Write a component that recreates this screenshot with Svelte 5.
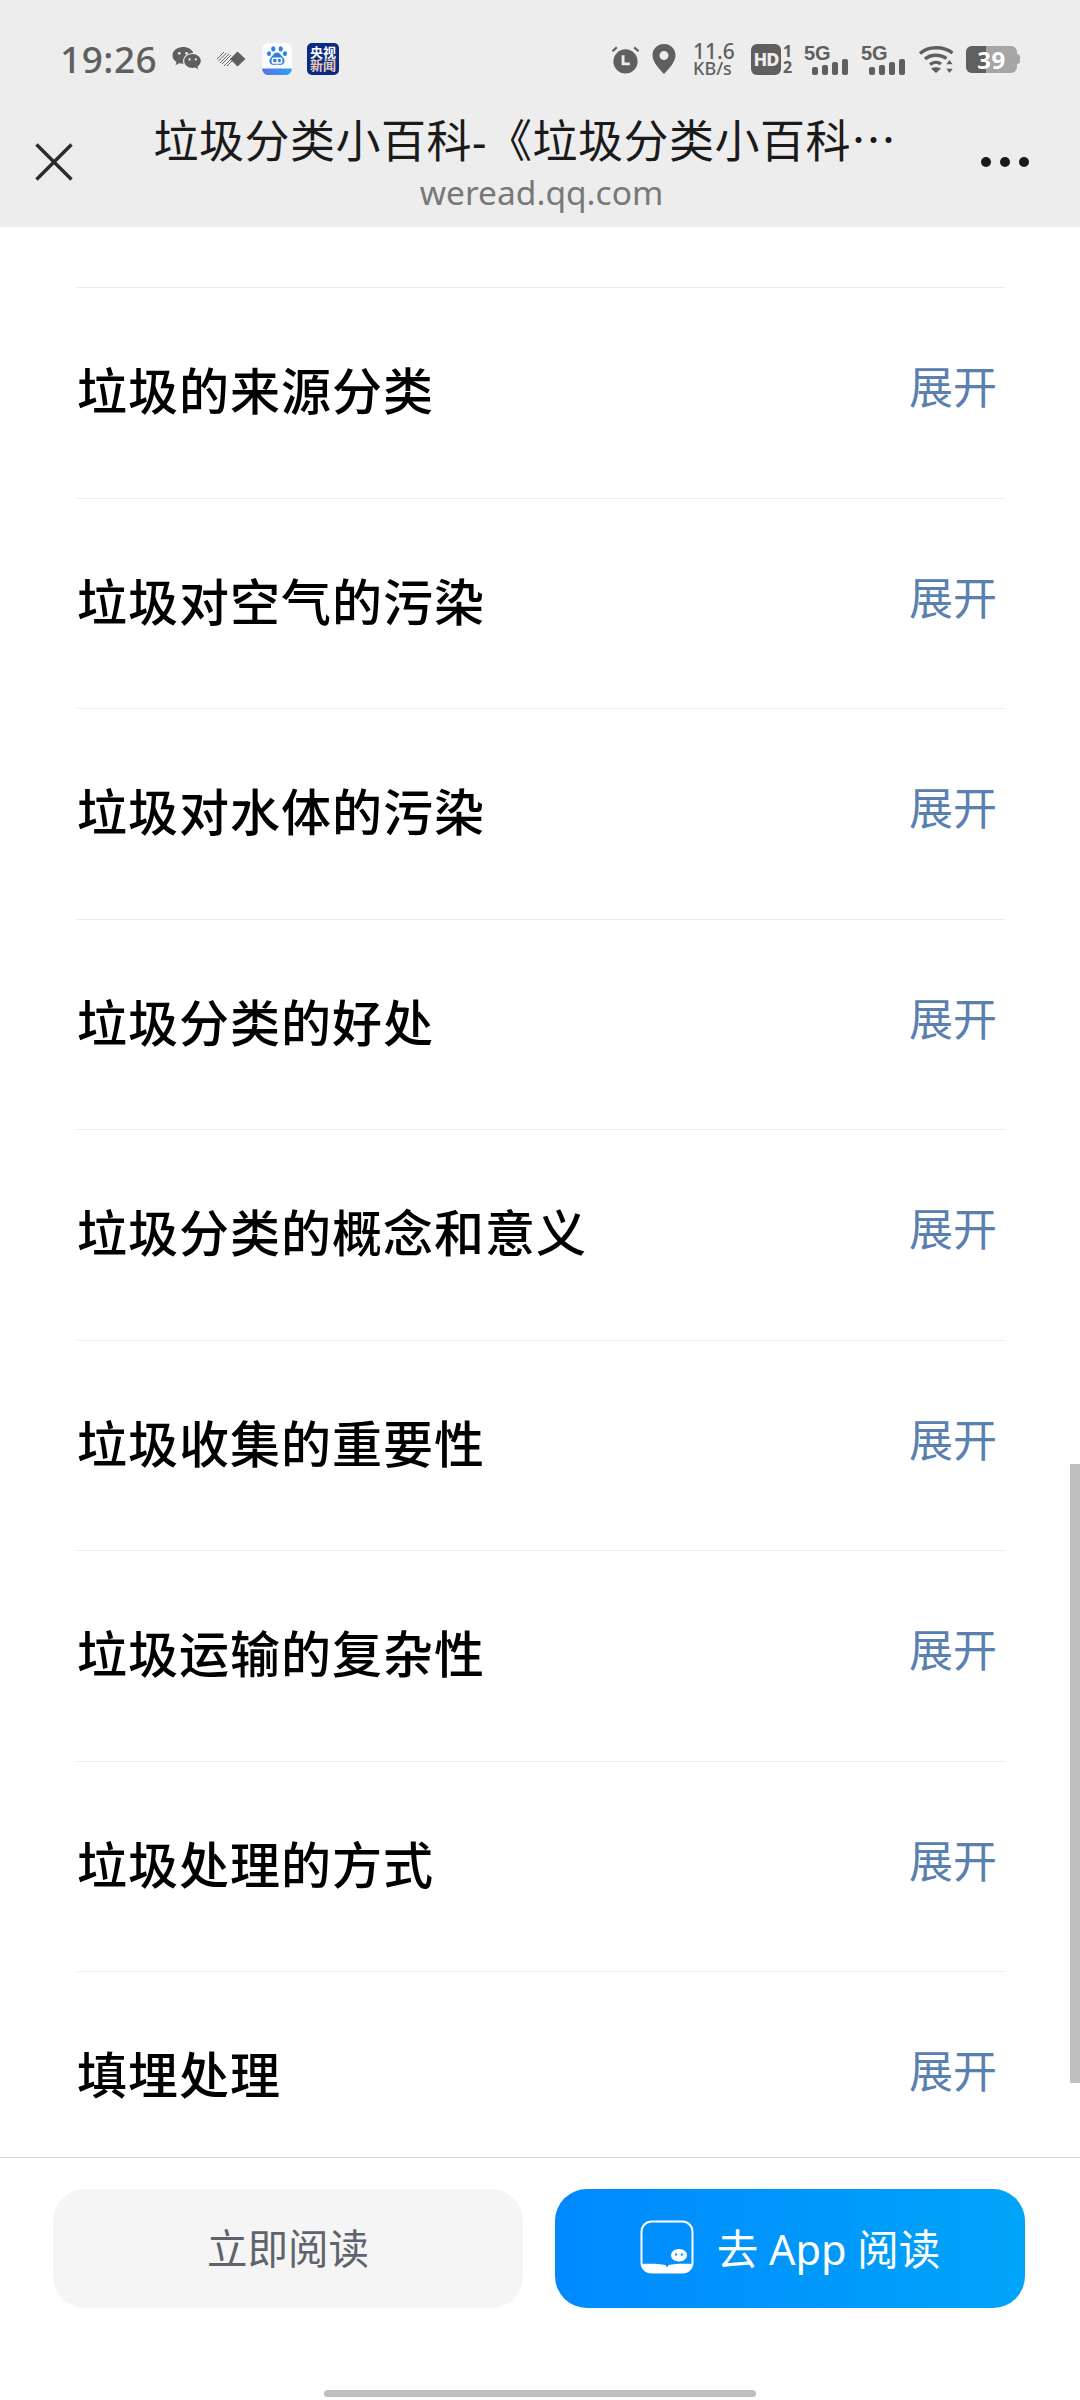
<script lang="ts">
  const chapters = [
    '垃圾的来源分类',
    '垃圾对空气的污染',
    '垃圾对水体的污染',
    '垃圾分类的好处',
    '垃圾分类的概念和意义',
    '垃圾收集的重要性',
    '垃圾运输的复杂性',
    '垃圾处理的方式',
    '填埋处理',
  ];
  const bars = [0, 1, 2, 3];
</script>

<div class="page">
  <header class="head">
    <div class="status">
      <div class="status-left">
        <span class="time">19:26</span>
        <svg class="ic-wechat" viewBox="0 0 28 26" width="29" height="27">
          <path d="M10.5 1C4.9 1 .5 4.6.5 9.1c0 2.6 1.5 4.8 3.8 6.3L3.4 18.500l3.500-1.800c1.100.3 2.200.5 3.400.5h.8c-.3-.9-.4-1.800-.4-2.700 0-4.300 4.100-7.800 9.100-7.800h.6C19.400 3.200 15.300 1 10.500 1z" fill="#5f5f5f"/>
          <path d="M19.800 7.800c-4.400 0-8 3-8 6.700s3.600 6.700 8 6.700c.9 0 1.800-.1 2.600-.4l2.900 1.600-.7-2.600c1.900-1.200 3.200-3.200 3.200-5.300 0-3.700-3.600-6.700-8-6.700z" fill="#5f5f5f"/>
          <circle cx="7" cy="7" r="1.300" fill="#ededed"/><circle cx="14" cy="7" r="1.300" fill="#ededed"/>
          <circle cx="17" cy="13" r="1.100" fill="#ededed"/><circle cx="23" cy="13" r="1.100" fill="#ededed"/>
        </svg>
        <svg class="ic-diamond" viewBox="0 0 30 16" width="30" height="16">
          <g stroke="#6a6a6a" stroke-width="1" fill="none">
            <path d="M1 8l7-7M2.500 10l8-8M4 12l9-9M6 13l9-9M8 15l8-8M11 15l6-6"/>
          </g>
          <path d="M21.500 0.500L29.500 8l-8 7.500L14 8z" fill="#5f5f5f"/>
        </svg>
        <svg class="ic-baidu" viewBox="0 0 28 30" width="30" height="32">
          <defs>
            <linearGradient id="bdband" x1="0" x2="1" y1="0" y2="0">
              <stop offset="0" stop-color="#5a6ee8"/><stop offset="1" stop-color="#2aa6f0"/>
            </linearGradient>
          </defs>
          <rect width="28" height="30" rx="6" fill="#fafcff"/>
          <path d="M0 24h28v0a6 6 0 0 1-6 6H6a6 6 0 0 1-6-6z" fill="url(#bdband)"/>
          <ellipse cx="10.500" cy="5.500" rx="2" ry="2.500" fill="#2f7fe0"/>
          <ellipse cx="17.500" cy="5.500" rx="2" ry="2.500" fill="#2f7fe0"/>
          <ellipse cx="6.500" cy="10" rx="1.900" ry="2.300" fill="#2f7fe0"/>
          <ellipse cx="21.500" cy="10" rx="1.900" ry="2.300" fill="#2f7fe0"/>
          <path d="M14 9c-3 0-3.500 3-6 5-2 2-1 6 2 6.500 1.500.2 2.800-.4 4-.4s2.500.6 4 .4c3-.5 4-4.500 2-6.500-2.500-2-3-5-6-5z" fill="#2f7fe0"/>
          <rect x="9" y="13.500" width="10" height="6" rx="1.500" fill="#fff"/>
          <rect x="10.500" y="15" width="3" height="3" fill="#2f7fe0"/><rect x="15" y="15" width="2.500" height="3" fill="#2f7fe0"/>
        </svg>
        <div class="ic-cctv"><span>央视</span><span class="tint">新闻</span></div>
      </div>
      <div class="status-right">
        <svg class="ic-alarm" viewBox="0 0 30 30" width="29" height="29">
          <circle cx="15" cy="17" r="12.500" fill="#5f5f5f"/>
          <path d="M12.500 10.500v9h7" fill="none" stroke="#ededed" stroke-width="3"/>
          <path d="M1.500 6.500L6 2.500M28.500 6.500L24 2.500" stroke="#5f5f5f" stroke-width="2.200"/>
        </svg>
        <svg class="ic-pin" viewBox="0 0 24 30" width="24" height="30">
          <path fill-rule="evenodd" d="M12 0C5.400 0 .5 4.900.5 11.300.5 18 7 25 12 30c5-5 11.500-12 11.500-18.700C23.500 4.900 18.600 0 12 0zm0 7a4.500 4.500 0 1 1 0 9 4.500 4.500 0 0 1 0-9z" fill="#5f5f5f"/>
        </svg>
        <div class="speed"><span>11.6</span><span>KB/s</span></div>
        <div class="hd"><span class="hd-box">HD</span><span class="hd-nums"><i>1</i><i>2</i></span></div>
        {#each [0, 1] as s}
          <div class="sig">
            <span class="sig-5g">5G</span>
            <div class="sig-bars">
              {#each bars as b}<span class="b{b}"></span>{/each}
            </div>
          </div>
        {/each}
        <svg class="ic-wifi" viewBox="0 0 36 30" width="37" height="30">
          <g fill="none" stroke="#5f5f5f" stroke-width="3.400">
            <path d="M1.500 9.500C10 2 25 2 34 9"/>
            <path d="M6.500 15C12 10 22 10 28 14.500"/>
            <path d="M11.500 20.500c3.500-2.800 8-2.800 11 -.5"/>
          </g>
          <path d="M17.500 29l-5-4.500c3-1.600 7-1.600 10 0z" fill="#5f5f5f"/>
          <path d="M31 16l3.200 4.200h-6.400zM31 29l3.200-4.200h-6.400z" fill="#5f5f5f"/>
        </svg>
        <div class="batt">
          <div class="batt-body"><div class="batt-fill"></div><span>39</span></div>
          <div class="batt-cap"></div>
        </div>
      </div>
    </div>
    <div class="nav">
      <svg class="ic-close" viewBox="0 0 38 38" width="38" height="38">
        <path d="M1.500 1.500l35 35M36.500 1.500l-35 35" stroke="#2b2b2b" stroke-width="3.400" fill="none"/>
      </svg>
      <div class="nav-text">
        <div class="nav-title">垃圾分类小百科-《垃圾分类小百科⋯</div>
        <div class="nav-host">weread.qq.com</div>
      </div>
      <div class="ic-more"><span></span><span></span><span></span></div>
    </div>
  </header>

  <main class="list">
    {#each chapters as c}
      <div class="row">
        <span class="row-title">{c}</span>
        <span class="row-toggle">展开</span>
      </div>
    {/each}
    <div class="scrollbar"></div>
  </main>

  <footer class="foot">
    <div class="btns">
      <button class="btn btn-plain">立即阅读</button>
      <button class="btn btn-app">
        <svg viewBox="0 0 54 54" width="54" height="54">
          <rect x="1.500" y="1.500" width="51" height="51" rx="10" fill="none" stroke="#fff" stroke-width="2"/>
          <path d="M1.500 44c8-.5 17-.5 24 1l1.500 2.500L28.500 45c7-1.500 16-1.500 24-1v-1 1.500a8 8 0 0 1-8 8h-35a8 8 0 0 1-8-8z" fill="#fff"/>
          <path d="M39 29c-4.500 0-8 2.800-8 6.300 0 3.400 3.500 6.200 8 6.200 4.400 0 8-2.800 8-6.200 0-3.500-3.600-6.300-8-6.300z" fill="#fff"/>
          <circle cx="36" cy="34.500" r="1.200" fill="#1a96f8"/><circle cx="42" cy="34.500" r="1.200" fill="#1a96f8"/>
        </svg>
        <span>去 App 阅读</span>
      </button>
    </div>
    <div class="home"></div>
  </footer>
</div>

<style>
  :global(body) { background: #fff; }
  .page {
    width: 1080px; height: 2400px; position: relative; overflow: hidden;
    display: flex; flex-direction: column; background: #fff;
    font-family: "Noto Sans", "Noto Sans CJK SC", sans-serif;
  }

  .head { height: 227px; flex-shrink: 0; background: #ededed; display: flex; flex-direction: column; }
  .status { height: 118px; display: flex; justify-content: space-between; padding: 41px 60px 0 60px; box-sizing: border-box; }
  .status-left, .status-right { display: flex; align-items: center; height: 36px; }
  .time { font-size: 37px; font-weight: 500; color: #5f5f5f; line-height: 36px; width: 112px; letter-spacing: 0.5px; }
  .ic-wechat { margin-right: 15px; }
  .ic-diamond { margin-right: 16px; }
  .ic-baidu { margin-right: 15px; }
  .ic-cctv {
    width: 32px; height: 32px; border-radius: 5px; background: #0a2a84; color: #fff;
    display: flex; flex-direction: column; align-items: center; justify-content: center;
    font-size: 13px; line-height: 13.5px; font-weight: 700;
  }
  .ic-cctv span { white-space: nowrap; }
  .ic-cctv .tint { color: #e8c8b8; }

  .status-right { gap: 0; }
  .ic-alarm { margin-right: 12px; }
  .ic-pin { margin-right: 17px; }
  .speed { display: flex; flex-direction: column; width: 44px; margin-right: 14px; color: #5f5f5f; font-weight: 500; }
  .speed span { font-size: 18px; line-height: 17px; white-space: nowrap; }
  .speed span:first-child { font-size: 21px; line-height: 18px; }
  .hd { display: flex; align-items: center; margin-right: 11px; width: 42px; }
  .hd-box {
    width: 30px; height: 31px; background: #5f5f5f; color: #ededed; border-radius: 6px; flex-shrink: 0;
    font-size: 18px; font-weight: 800; line-height: 31px; text-align: center; letter-spacing: -1px;
  }
  .hd-nums { display: flex; flex-direction: column; margin-left: 2px; color: #5f5f5f; font-size: 16px; line-height: 16px; font-weight: 700; }
  .hd-nums i { font-style: normal; }
  .sig { width: 44px; height: 31px; position: relative; margin-right: 13px; }
  .sig-5g { position: absolute; left: 0; top: -1px; font-size: 20px; line-height: 20px; font-weight: 700; color: #5f5f5f; font-family: "Liberation Sans", sans-serif; }
  .sig-bars { position: absolute; right: 0; bottom: 0; display: flex; align-items: flex-end; gap: 4px; }
  .sig-bars span { width: 6px; background: #5f5f5f; border-radius: 2px; }
  .b0 { height: 8px; }
  .b1 { height: 10px; }
  .b2 { height: 13px; }
  .b3 { height: 16px; }
  .ic-wifi { margin-right: 11px; }
  .batt { display: flex; align-items: center; }
  .batt-body {
    position: relative; width: 51px; height: 27px; background: #a6a6a6; border-radius: 6px;
    display: flex; align-items: center; justify-content: center;
  }
  .batt-fill { position: absolute; left: 0; top: 0; bottom: 0; width: 20px; background: #5f5f5f; border-radius: 6px 0 0 6px; }
  .batt-body span { position: relative; color: #fff; font-size: 24px; font-weight: 700; line-height: 27px; letter-spacing: 0.5px; }
  .batt-cap { width: 3px; height: 10px; background: #a6a6a6; border-radius: 0 3px 3px 0; }

  .nav { flex: 1; display: flex; align-items: flex-start; position: relative; }
  .ic-close { position: absolute; left: 35px; top: 25px; }
  .nav-text { width: 100%; display: flex; flex-direction: column; align-items: center; }
  .nav-title { font-size: 45px; line-height: 46px; color: #1a1a1a; margin-left: -30px; white-space: nowrap; letter-spacing: 0.5px; }
  .nav-host { font-size: 33.5px; line-height: 40px; color: #787878; margin-top: 8px; margin-left: 3px; }
  .ic-more { position: absolute; left: 981px; top: 39px; display: flex; gap: 9px; }
  .ic-more span { width: 10px; height: 10px; border-radius: 50%; background: #1a1a1a; }

  .list { flex: 1; position: relative; overflow: hidden; padding: 60px 0 0 0; min-height: 0; }
  .row {
    height: 210.5px; margin: 0 75px 0 77px; box-sizing: border-box;
    border-top: 1.5px solid #ebebeb; display: flex; justify-content: space-between; align-items: flex-start;
  }
  .row-title { font-size: 50px; line-height: 60px; color: #000; margin-top: 73px; letter-spacing: 1px; font-weight: 500; }
  .row-toggle { font-size: 44px; line-height: 50px; color: #5a80b0; margin-top: 74px; margin-right: 8px; }
  .scrollbar { position: absolute; right: 0; top: 1237px; width: 10px; height: 619px; background: #c0c0c0; }

  .foot { height: 243px; flex-shrink: 0; box-sizing: border-box; border-top: 1.5px solid #d6d6d6; background: #fff; position: relative; }
  .btns { display: flex; gap: 32px; padding: 31px 55px 0 53px; }
  .btn {
    flex: 1; height: 119px; border: none; border-radius: 32px; display: flex; align-items: center; justify-content: center;
    font-family: inherit; font-size: 40.5px; padding: 0 0 4px;
  }
  .btn-plain { background: #f5f5f5; color: #5f646c; }
  .btn-app { background: linear-gradient(90deg, #0089ff, #00a4f8); color: #fff; gap: 23px; font-size: 41.5px; }
  .home { position: absolute; left: 324px; top: 232px; width: 432px; height: 7px; border-radius: 4px; background: #bfbfbf; }
</style>
